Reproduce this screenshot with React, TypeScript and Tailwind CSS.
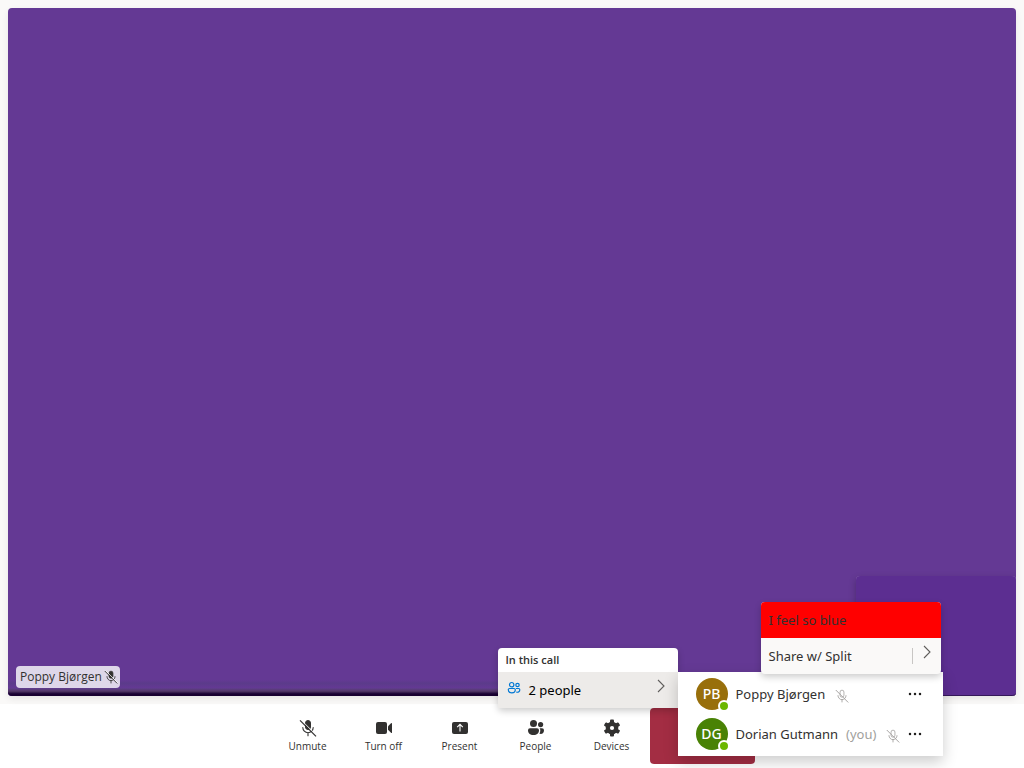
import type { ReactNode } from "react";

function MicOff({ className, thin = false }: { className?: string; thin?: boolean }) {
  return (
    <svg viewBox="0 0 18 18" className={className} fill="none" stroke="currentColor" aria-hidden="true">
      <rect x="6.5" y="1.5" width="5" height="9" rx="2.5" fill={thin ? "none" : "currentColor"} />
      <path d="M3.8 8.5a5.2 5.2 0 0 0 10.4 0M9 13.7v3" strokeWidth="1.1" strokeLinecap="round" />
      {!thin && <path d="M2 .8 17.7 16.5" stroke="white" strokeWidth="1" />}
      <path d="M1 1.3 17 17.3" strokeWidth="1.2" />
    </svg>
  );
}

function Camera() {
  return (
    <svg viewBox="0 0 18 18" className="size-[18px]" fill="currentColor" aria-hidden="true">
      <rect x="1" y="3" width="11" height="12" rx="2" />
      <path d="M13 7.2 16 4.2c.5-.5 1-.2 1 .4v8.8c0 .6-.5.9-1 .4l-3-3z" />
    </svg>
  );
}

function ShareUp() {
  return (
    <svg viewBox="0 0 18 18" className="size-[18px]" aria-hidden="true">
      <rect x="1" y="3" width="16" height="12" rx="2" fill="currentColor" />
      <path d="M9 12.5v-7M6.2 8.2 9 5.4l2.8 2.8" fill="none" stroke="white" strokeWidth="1.1" />
    </svg>
  );
}

function PeopleFilled() {
  return (
    <svg viewBox="0 0 18 18" className="size-[18px]" fill="currentColor" aria-hidden="true">
      <circle cx="6.5" cy="4.5" r="3.5" />
      <circle cx="13.6" cy="5.6" r="2.6" />
      <path d="M3 9.2h7a2 2 0 0 1 2 2c0 3-2 4.8-5.5 4.8S1 14.2 1 11.2a2 2 0 0 1 2-2z" />
      <path d="M12.6 9.2H15a2 2 0 0 1 2 2c0 2.6-1.6 4.2-4.6 3.6.6-1 .9-2.1.9-3.6 0-.8-.2-1.5-.7-2z" />
    </svg>
  );
}

function Gear() {
  return (
    <svg viewBox="0 0 18 18" className="size-[18px]" aria-hidden="true">
      <g fill="currentColor">
        <circle cx="9" cy="9" r="6.3" />
        <rect x="7" y="0.6" width="4" height="16.8" rx="1" />
        <rect x="7" y="0.6" width="4" height="16.8" rx="1" transform="rotate(60 9 9)" />
        <rect x="7" y="0.6" width="4" height="16.8" rx="1" transform="rotate(120 9 9)" />
      </g>
      <circle cx="9" cy="9" r="2.1" fill="white" />
    </svg>
  );
}

function PeopleOutline() {
  return (
    <svg viewBox="0 0 14 14" className="size-[14px] text-[#0078d4]" fill="none" stroke="currentColor" aria-hidden="true">
      <circle cx="4.7" cy="3.7" r="2.2" strokeWidth="1.2" />
      <circle cx="10.5" cy="4" r="1.7" strokeWidth="1.2" />
      <path
        d="M2.5 7.5h4.6a1.2 1.2 0 0 1 1.2 1.2c0 2-1.3 3.1-3.5 3.1s-3.5-1.1-3.5-3.1a1.2 1.2 0 0 1 1.2-1.2zM9 7.5h2.6a1.2 1.2 0 0 1 1.2 1.2c0 1.9-1.3 2.9-3.5 2.4"
        strokeWidth="1.2"
      />
    </svg>
  );
}

function Chevron() {
  return (
    <svg viewBox="0 0 8 14" className="h-[14px] w-2 text-[#605e5c]" fill="none" stroke="currentColor" aria-hidden="true">
      <path d="M1 1l6 6-6 6" strokeWidth="1.1" />
    </svg>
  );
}

function Control({ icon, label }: { icon: ReactNode; label: string }) {
  return (
    <button type="button" className="flex h-14 w-[76px] flex-col items-center gap-px pt-[11px] font-['Open_Sans','Noto_Sans',sans-serif] text-[10px] leading-4">
      {icon}
      {label}
    </button>
  );
}

type Person = { name: string; initials: string; color: string; you?: boolean };

const people: Person[] = [
  { name: "Poppy Bjørgen", initials: "PB", color: "bg-[#986f0b]" },
  { name: "Dorian Gutmann", initials: "DG", color: "bg-[#498205]", you: true },
];

function PersonRow({ person }: { person: Person }) {
  return (
    <li className="flex h-10 items-center pr-5 pl-[18px]">
      <span className={`relative flex size-8 items-center justify-center rounded-full text-sm font-medium text-white ${person.color}`}>
        {person.initials}
        <span className="absolute -right-0.5 -bottom-0.5 size-3 rounded-full border-2 border-white bg-[#6bb700]" />
      </span>
      <span className="ml-2 pt-0.5 text-[13px]">{person.name}</span>
      {person.you && <span className="ml-2 pt-0.5 text-[13px] text-[#a19f9d]">(you)</span>}
      <MicOff thin className="mt-1 ml-2.5 size-3.5 text-[#a19f9d]" />
      <button type="button" aria-label={`More options for ${person.name}`} className="ml-auto flex h-8 w-4 items-center justify-center">
        <svg viewBox="0 0 14 4" className="h-1 w-3.5" fill="#201f1e" aria-hidden="true">
          <circle cx="2" cy="2" r="1.25" />
          <circle cx="7" cy="2" r="1.25" />
          <circle cx="12" cy="2" r="1.25" />
        </svg>
      </button>
    </li>
  );
}

export default function App() {
  return (
    <div className="flex h-screen flex-col overflow-hidden bg-[#faf9f8] font-['Noto_Sans',sans-serif] text-[#323130]">
      <main className="flex min-h-0 flex-1 p-2">
        <section className="relative flex flex-1 items-end overflow-hidden rounded bg-[#643994] p-2 shadow-[0_3px_7px_rgba(0,0,0,0.08)]">
          <div className="absolute inset-x-0 bottom-0 h-4 bg-linear-to-b from-[#643994] via-[#5b3b8a] via-20% to-[#643994] to-50%" />
          <div className="absolute inset-x-0 bottom-0 h-2 bg-linear-to-b from-[#613d90] via-[#533866] via-40% to-[#180030] to-75%" />
          <div className="relative flex h-[22px] items-center gap-0.5 rounded bg-[#ded7e9] pr-0.5 pl-1 font-['Open_Sans','Noto_Sans',sans-serif] text-xs font-medium">
            Poppy Bjørgen
            <MicOff className="size-3.5" />
          </div>
          <div className="absolute right-0 bottom-0 h-[120px] w-40 rounded bg-[#a58bc0] shadow-[0_3px_7px_rgba(0,0,0,0.25)]">
            <div className="h-full rounded border-b border-[#35185a] bg-[#5c2e91]" />
          </div>
        </section>
      </main>

      <footer className="flex h-16 shrink-0 items-center justify-center bg-white">
        <Control icon={<MicOff className="size-[18px]" />} label="Unmute" />
        <Control icon={<Camera />} label="Turn off" />
        <Control icon={<ShareUp />} label="Present" />
        <div className="relative">
          <Control icon={<PeopleFilled />} label="People" />
          <div className="absolute bottom-full left-0 z-10 w-[180px] rounded-sm bg-white shadow-[0_3px_7px_rgba(0,0,0,0.2)]">
            <h2 className="flex h-6 items-center px-2 font-['Open_Sans','Noto_Sans',sans-serif] text-[11px] font-semibold">In this call</h2>
            <button type="button" className="flex h-9 w-full items-center bg-[#edebe9] px-[9px] text-[13px] text-black">
              <span className="mb-1">
                <PeopleOutline />
              </span>
              <span className="ml-2 pt-0.5">2 people</span>
              <span className="mr-1 mb-2 ml-auto">
                <Chevron />
              </span>
            </button>
            <div className="absolute top-6 left-full w-[265px] bg-white py-0.5 shadow-[0_6px_14px_rgba(0,0,0,0.2)]">
              <ul>
                {people.map((person) => (
                  <PersonRow key={person.name} person={person} />
                ))}
              </ul>
              <div className="absolute right-0.5 bottom-full -mb-0.5 w-[180px] overflow-hidden rounded-sm bg-[#faf9f8] text-[13px] shadow-[0_3px_7px_rgba(0,0,0,0.2)]">
                <button type="button" className="flex h-9 w-full items-center bg-[#ff0000] px-2 pt-0.5">
                  I feel so blue
                </button>
                <div className="flex h-9 items-center">
                  <button type="button" className="h-full flex-1 px-2 pt-0.5 text-left">
                    Share w/ Split
                  </button>
                  <span className="h-4 w-px bg-[#c8c6c4]" />
                  <button type="button" aria-label="More share options" className="flex h-full w-7 items-center justify-center pb-2">
                    <Chevron />
                  </button>
                </div>
              </div>
            </div>
          </div>
        </div>
        <Control icon={<Gear />} label="Devices" />
        <button type="button" aria-label="Leave" className="h-14 w-[105px] rounded-sm bg-[#a32d43]" />
      </footer>
    </div>
  );
}
